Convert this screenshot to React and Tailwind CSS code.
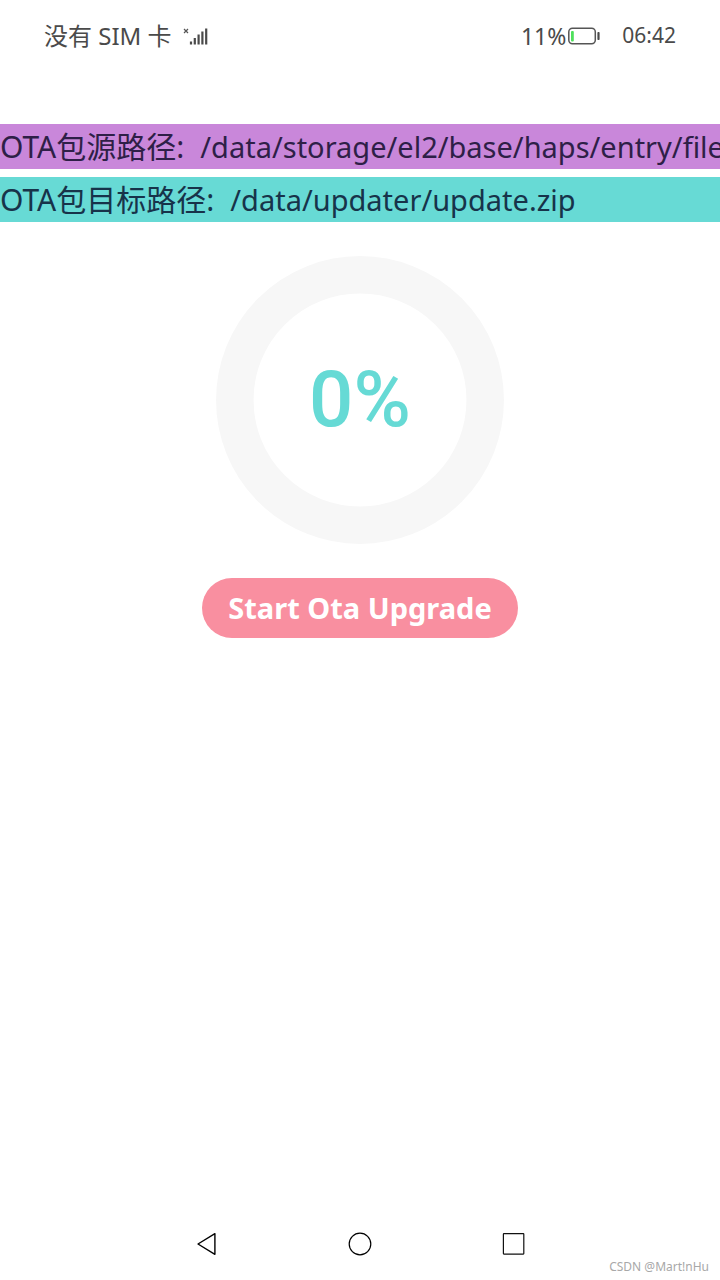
import React from "react";

function SignalIcon() {
  return (
    <svg width="28" height="20" viewBox="0 0 28 20" aria-hidden="true">
      <path d="M2 3l4 4M6 3l-4 4" stroke="#555" strokeWidth="1.2" fill="none" />
      <path d="M9 15.5V18.5M12.8 12V18.5M16.6 8.5V18.5M20.4 5.5V18.5M24.2 2.5V18.5" stroke="#4a4a4a" strokeWidth="2.2" fill="none" />
    </svg>
  );
}

function BatteryIcon() {
  return (
    <svg width="34" height="18" viewBox="0 0 34 18" aria-hidden="true">
      <rect x="2.8" y="1.3" width="26.5" height="15.4" rx="3.6" fill="none" stroke="#555" strokeWidth="1.5" />
      <rect x="5" y="4" width="2.8" height="10.5" rx="1" fill="#4fe05c" />
      <rect x="31.4" y="5" width="2.2" height="8" rx="0.8" fill="#4a4a4a" />
    </svg>
  );
}

function PathRow({ label, path, tone }) {
  return (
    <p className={`flex h-[45px] items-baseline gap-4 overflow-hidden whitespace-nowrap leading-[45px] ${tone}`}>
      <span className="text-[30px]">{label}</span>
      <span className="text-[29px]">{path}</span>
    </p>
  );
}

function ProgressRing({ value }) {
  return (
    <div className="grid place-items-center" role="progressbar" aria-valuenow={value} aria-valuemin={0} aria-valuemax={100}>
      <svg className="col-start-1 row-start-1" width="288" height="288" viewBox="0 0 288 288" aria-hidden="true">
        <circle cx="144" cy="144" r="125.2" fill="none" stroke="#f7f7f7" strokeWidth="37.5" />
      </svg>
      <span className="col-start-1 row-start-1 font-['Roboto','Noto_Sans',sans-serif] text-[78px] leading-none font-medium text-[#66dad5]">{value}%</span>
    </div>
  );
}

export default function App() {
  return (
    <div className="flex min-h-screen flex-col bg-white font-['Noto_Sans','Noto_Sans_CJK_SC',sans-serif]">
      <header className="flex h-[72px] items-center justify-between px-11 text-[#4a4a4a]">
        <div className="flex items-center gap-[10px]">
          <span className="text-2xl">没有 SIM 卡</span>
          <SignalIcon />
        </div>
        <div className="flex items-center">
          <span className="text-[23px]">11%</span>
          <BatteryIcon />
          <span className="ml-[22px] text-[21px]">06:42</span>
        </div>
      </header>

      <main className="flex grow flex-col pt-[52px]">
        <div className="flex flex-col gap-2">
          <PathRow label="OTA包源路径:" path="/data/storage/el2/base/haps/entry/file" tone="bg-[#c987da] text-[#2e1f47]" />
          <PathRow label="OTA包目标路径:" path="/data/updater/update.zip" tone="bg-[#67dad5] text-[#17334a]" />
        </div>
        <div className="flex flex-col items-center gap-[34px] pt-[34px]">
          <ProgressRing value={0} />
          <button type="button" className="h-[60px] rounded-full bg-[#f98fa0] px-[26px] text-[29px] font-bold text-white">
            Start Ota Upgrade
          </button>
        </div>
      </main>

      <footer className="grid h-[72px] grid-cols-[1fr_auto_1fr] items-center">
        <span />
        <nav className="flex gap-[130px]">
          <button type="button" aria-label="Back">
            <svg width="24" height="24" viewBox="0 0 24 24" fill="none" stroke="#000" strokeWidth="1.4" strokeLinejoin="round">
              <path d="M4 12L20.9 1.7V22.3Z" />
            </svg>
          </button>
          <button type="button" aria-label="Home">
            <svg width="24" height="24" viewBox="0 0 24 24" fill="none" stroke="#000" strokeWidth="1.2">
              <circle cx="12" cy="12" r="10.8" />
            </svg>
          </button>
          <button type="button" aria-label="Recents">
            <svg width="24" height="24" viewBox="0 0 24 24" fill="none" stroke="#111" strokeWidth="1.2">
              <rect x="1.4" y="1.7" width="20.4" height="20.4" rx="0.5" />
            </svg>
          </button>
        </nav>
        <span className="self-end justify-self-end pr-[11px] pb-1 text-xs leading-[18px] text-[#a8a8a8]">CSDN @Mart!nHu</span>
      </footer>
    </div>
  );
}
